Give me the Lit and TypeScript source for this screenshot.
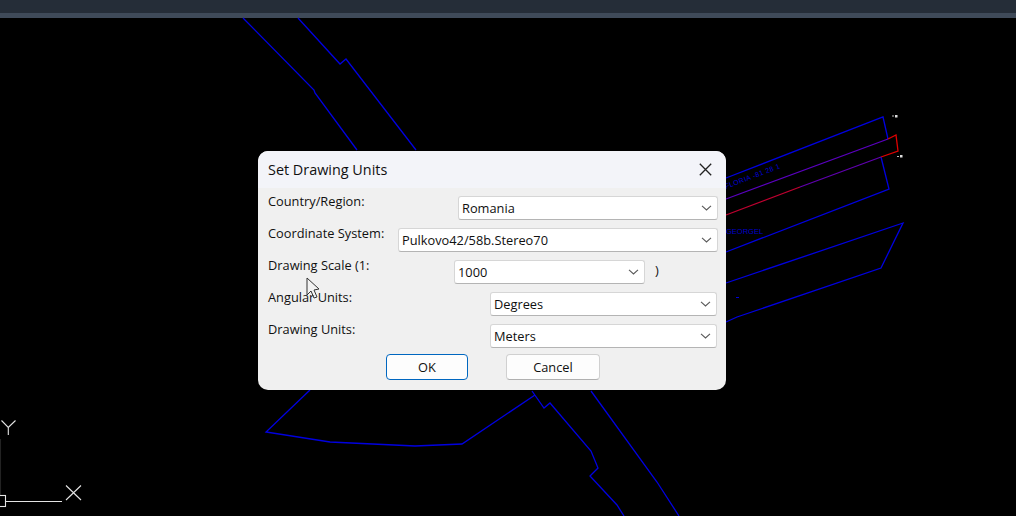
import { LitElement, html, css, svg } from "lit";
import { customElement } from "lit/decorators.js";

// drawing geometry, in page pixels
const BLUE_LINES = [
  "243,18 314,90 315,93 357,150",
  "298,18 340,64 346,59 416,150",
  "310,390 266,432 330,442 415,446 462,444 535,395",
  "532,391 544,408 550,403 591,451 598,468 590,476 617,505 624,516",
  "591,391 657,482 679,516",
  "726,178 883,117 888,139",
  "881,157 889,189 726,252",
  "726,283 903,223 881,268 737,317 726,322",
];

const chevron = html`<svg class="chev" width="11" height="6" viewBox="0 0 11 6">
  <path d="M1 .8 5.5 5 10 .8" fill="none" stroke="#5a5a5a" stroke-width="1.1" />
</svg>`;

@customElement("app-root")
export class AppRoot extends LitElement {
  static styles = css`
    :host {
      display: block;
      position: relative;
      width: 1016px;
      height: 516px;
      overflow: hidden;
      background: #000;
      font-family: "Open Sans", "Liberation Sans", sans-serif;
    }
    .titlebar { height: 13px; background: #252d38; }
    .strip { height: 5px; background: #3f4a59; }
    .canvas { position: absolute; left: 0; top: 0; }
    .dialog {
      position: absolute;
      left: 258px;
      top: 151px;
      width: 468px;
      height: 239px;
      box-sizing: border-box;
      border-radius: 10px;
      background: #f0f0f0;
      overflow: hidden;
      color: #101010;
      font-size: 12.8px;
    }
    .head {
      display: flex;
      align-items: center;
      justify-content: space-between;
      height: 37px;
      padding: 0 14px 0 10px;
      background: #f3f4f9;
      font-size: 14.4px;
    }
    .form {
      display: flex;
      flex-direction: column;
      gap: 8px;
      padding: 8px 8px 0 10px;
    }
    .row { display: flex; height: 24px; }
    .label { line-height: 18px; margin-top: -4px; }
    .country .label { width: 190px; }
    .coord .label { width: 130px; }
    .scale .label { width: 186px; }
    .units .label { width: 222px; }
    .units { padding-right: 1px; }
    .select {
      flex: 1;
      display: flex;
      align-items: center;
      justify-content: space-between;
      box-sizing: border-box;
      padding: 0 5px 0 3px;
      background: #fff;
      border: 1px solid #d6d6d6;
      border-bottom-color: #b4b4b4;
      border-radius: 3px;
    }
    .scale .select { flex: none; width: 191px; }
    .paren { margin-left: 10px; line-height: 20px; }
    .buttons {
      display: flex;
      gap: 38px;
      margin-top: -2px;
      padding-left: 118px;
    }
    .btn {
      height: 26px;
      box-sizing: border-box;
      display: flex;
      align-items: center;
      justify-content: center;
      background: #fdfdfd;
      border: 1px solid #d0d0d0;
      border-bottom-color: #b0b0b0;
      border-radius: 4px;
    }
    .ok { width: 82px; border: 1.5px solid #0067c0; }
    .cancel { width: 94px; }
    .cursor { position: absolute; left: 300px; top: 272px; }
  `;

  private renderCanvas() {
    return html`<svg class="canvas" width="1016" height="516" viewBox="0 0 1016 516">
      ${BLUE_LINES.map(
        (p) => svg`<polyline points=${p} fill="none" stroke="#0000e0" stroke-width="1.3" />`
      )}
      <polyline points="726,199 888,139" fill="none" stroke="#5a00c0" stroke-width="1.3" />
      <polyline points="726,215 800,187" fill="none" stroke="#c00030" stroke-width="1.3" />
      <polyline points="800,187 881,157" fill="none" stroke="#6000b0" stroke-width="1.3" />
      <polyline points="888,139 896,135 898,151 881,157" fill="none" stroke="#e00000" stroke-width="1.3" />
      <text x="726" y="189" transform="rotate(-21 726 189)" fill="#0000d8" font-family="Liberation Sans" font-size="7" letter-spacing=".4">FLORIA -81 28 1</text>
      <text x="726" y="234" fill="#0000c8" font-family="Liberation Sans" font-size="7.5">GEORGEL</text>
      <path d="M736 297.5h3" stroke="#0000d8" />
      <path d="M892 116h2M897 156.500h2" stroke="#bbb" />
      <rect x="895" y="115" width="2.500" height="2.500" fill="#ddd" />
      <rect x="900" y="155" width="2.500" height="2.500" fill="#ddd" />
      <g fill="none" stroke="#e4e4e4" stroke-width="1.1">
        <path d="M1.500 420.500 8.300 427.500 15.500 420.500M8.300 427.500V435" />
        <path d="M.5 439V495" stroke="#222" />
        <rect x="-3" y="495.500" width="8.500" height="11" />
        <path d="M6 501.500H62" />
        <path d="M66 485.500 81 500M81 485.500 66 500" />
      </g>
    </svg>`;
  }

  render() {
    return html`
      <div class="titlebar"></div>
      <div class="strip"></div>
      ${this.renderCanvas()}
      <div class="dialog">
        <div class="head">
          <span>Set Drawing Units</span>
          <svg width="13" height="13" viewBox="0 0 13 13">
            <path d="M.8 .8 12.200 12.200M12.200 .8 .8 12.200" stroke="#222" stroke-width="1.3" />
          </svg>
        </div>
        <div class="form">
          <div class="row country">
            <span class="label">Country/Region:</span>
            <div class="select">Romania ${chevron}</div>
          </div>
          <div class="row coord">
            <span class="label">Coordinate System:</span>
            <div class="select">Pulkovo42/58b.Stereo70 ${chevron}</div>
          </div>
          <div class="row scale">
            <span class="label">Drawing Scale (1:</span>
            <div class="select">1000 ${chevron}</div>
            <span class="paren">)</span>
          </div>
          <div class="row units">
            <span class="label">Angular Units:</span>
            <div class="select">Degrees ${chevron}</div>
          </div>
          <div class="row units">
            <span class="label">Drawing Units:</span>
            <div class="select">Meters ${chevron}</div>
          </div>
          <div class="buttons">
            <div class="btn ok">OK</div>
            <div class="btn cancel">Cancel</div>
          </div>
        </div>
      </div>
      <svg class="cursor" width="24" height="30" viewBox="300 272 24 30">
        <path d="M307 278V295L311 291 314 298 317 297 314 290 319 289Z" fill="#f4f4f4" fill-opacity=".55" stroke="#333" stroke-width="1" />
      </svg>
    `;
  }
}
